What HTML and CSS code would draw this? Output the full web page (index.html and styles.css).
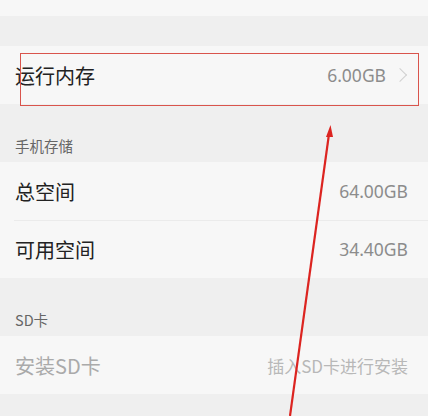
FILE: index.html
```html
<!doctype html>
<html lang="zh-CN">
<head>
  <meta charset="utf-8">
  <title>存储空间</title>
  <link rel="stylesheet" href="styles.css">
</head>
<body>
  <div class="page">
    <div class="row row-top"></div>
    <div class="gap"></div>
    <div class="row">
      <span class="title">运行内存</span>
      <span class="value">6.00GB<span class="chevron"></span></span>
    </div>
    <div class="section-head">手机存储</div>
    <div class="row">
      <span class="title">总空间</span>
      <span class="value">64.00GB</span>
    </div>
    <div class="row">
      <span class="title">可用空间</span>
      <span class="value">34.40GB</span>
    </div>
    <div class="section-head">SD卡</div>
    <div class="row disabled">
      <span class="title">安装SD卡</span>
      <span class="value">插入SD卡进行安装</span>
    </div>

    <!-- annotation overlay -->
    <div class="mark-box"></div>
    <svg class="mark-arrow" width="428" height="416" viewBox="0 0 428 416">
      <path d="M290 416 L329 134" stroke="#dc2420" stroke-width="2.2" fill="none"/>
      <path d="M330.5 125 L326 137 L333 137 Z" fill="#dc2420"/>
    </svg>
  </div>
</body>
</html>
```

FILE: styles.css
```css
body {
  margin: 0;
  font-family: "Noto Sans CJK SC", "Noto Sans", sans-serif;
  background: #efefef;
  color: #222;
}
.page {
  position: relative;
  width: 428px;
  height: 416px;
  overflow: hidden;
}
.row {
  height: 58px;
  background: #f7f7f7;
  display: flex;
  align-items: center;
  justify-content: space-between;
  padding: 0 20px 0 15px;
  position: relative;
}
.row + .row::before {
  content: "";
  position: absolute;
  top: 0;
  left: 14px;
  right: 0;
  border-top: 1px solid #ebebeb;
}
.row-top {
  height: 16px;
}
.gap {
  height: 30px;
}
.title {
  font-size: 20px;
}
.value {
  font-size: 17.5px;
  color: #8c8c8c;
  display: flex;
  align-items: center;
  font-family: "Noto Sans", "Noto Sans CJK SC", sans-serif;
}
.chevron {
  width: 9px;
  height: 9px;
  border-top: 1.5px solid #d0d0d0;
  border-right: 1.5px solid #d0d0d0;
  transform: rotate(45deg);
  margin-left: 9px;
  margin-right: 3px;
}
.section-head {
  height: 58px;
  box-sizing: border-box;
  padding: 0 15px 6px;
  display: flex;
  align-items: flex-end;
  font-size: 14.5px;
  color: #666;
}
.disabled .title {
  color: #aaa;
}
.disabled .value {
  color: #b8b8b8;
  font-size: 17px;
  font-family: "Noto Sans CJK SC", sans-serif;
}
.mark-box {
  position: absolute;
  left: 20px;
  top: 53px;
  width: 397px;
  height: 51px;
  border: 1.5px solid #d9544c;
}
.mark-arrow {
  position: absolute;
  left: 0;
  top: 0;
}
```
